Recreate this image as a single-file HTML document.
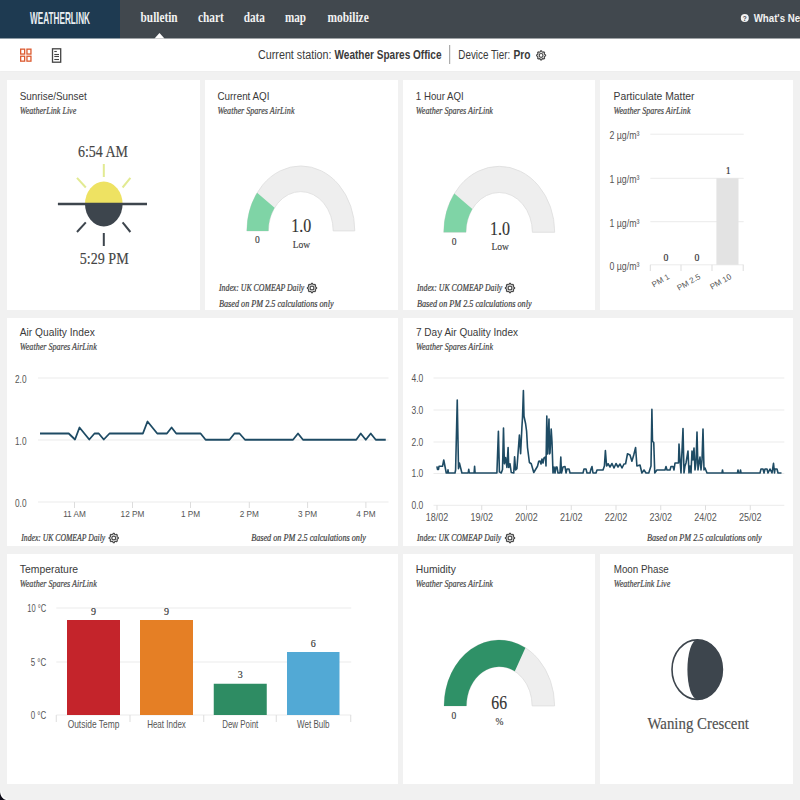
<!DOCTYPE html>
<html><head><meta charset="utf-8"><style>
*{margin:0;padding:0;box-sizing:border-box}
html,body{width:800px;height:800px;overflow:hidden;background:#f1f1f1;font-family:"Liberation Sans",sans-serif}
.hdr{position:absolute;left:0;top:0;width:800px;height:38px;background:#41484e}
.logo{position:absolute;left:0;top:0;width:120px;height:38px;background:#1e3a51}
.tb{position:absolute;left:0;top:38px;width:800px;height:33px;background:#fff;box-shadow:0 0.5px 1.5px rgba(0,0,0,0.04)}
.card{position:absolute;background:#fff}
svg.ov{position:absolute;left:0;top:0}
</style></head>
<body>
<div class="hdr"></div><div class="logo"></div><div class="tb"></div>
<div class="card" style="left:7px;top:80px;width:193px;height:229.5px"></div><div class="card" style="left:205px;top:80px;width:192.5px;height:229.5px"></div><div class="card" style="left:402.5px;top:80px;width:192.5px;height:229.5px"></div><div class="card" style="left:600px;top:80px;width:193px;height:229.5px"></div><div class="card" style="left:7px;top:318px;width:390.5px;height:228px"></div><div class="card" style="left:402.5px;top:318px;width:390.5px;height:228px"></div><div class="card" style="left:7px;top:554px;width:390.5px;height:229.5px"></div><div class="card" style="left:402.5px;top:554px;width:192.5px;height:229.5px"></div><div class="card" style="left:600px;top:554px;width:193px;height:229.5px"></div>
<svg class="ov" width="800" height="800" viewBox="0 0 800 800">
<rect x="0" y="37.5" width="120" height="1" fill="#1e3a51"/><rect x="120" y="37.5" width="680" height="1" fill="#41484e"/>
<polygon points="154.5,38.5 159.5,33 164.5,38.5" fill="#fff"/>
<text x="30" y="24" font-family='"Liberation Sans", sans-serif' font-size="16.2" font-weight="700" font-style="normal" fill="#e8edf2" text-anchor="start" textLength="60" lengthAdjust="spacingAndGlyphs" >WEATHERLINK</text>
<text x="140.6" y="22.2" font-family='"Liberation Serif", serif' font-size="14.5" font-weight="700" font-style="normal" fill="#f2f2f2" text-anchor="start" textLength="37" lengthAdjust="spacingAndGlyphs" >bulletin</text>
<text x="198" y="22.2" font-family='"Liberation Serif", serif' font-size="14.5" font-weight="700" font-style="normal" fill="#f2f2f2" text-anchor="start" textLength="25.75" lengthAdjust="spacingAndGlyphs" >chart</text>
<text x="243.75" y="22.2" font-family='"Liberation Serif", serif' font-size="14.5" font-weight="700" font-style="normal" fill="#f2f2f2" text-anchor="start" textLength="21.25" lengthAdjust="spacingAndGlyphs" >data</text>
<text x="285" y="22.2" font-family='"Liberation Serif", serif' font-size="14.5" font-weight="700" font-style="normal" fill="#f2f2f2" text-anchor="start" textLength="21" lengthAdjust="spacingAndGlyphs" >map</text>
<text x="327.5" y="22.2" font-family='"Liberation Serif", serif' font-size="14.5" font-weight="700" font-style="normal" fill="#f2f2f2" text-anchor="start" textLength="41.25" lengthAdjust="spacingAndGlyphs" >mobilize</text>
<circle cx="744.8" cy="18" r="4" fill="#f2f2f2"/>
<text x="744.8" y="20.6" font-family='"Liberation Sans", sans-serif' font-size="6.5" font-weight="700" font-style="normal" fill="#3e464d" text-anchor="middle" >?</text>
<text x="753.7" y="21.6" font-family='"Liberation Sans", sans-serif' font-size="10.5" font-weight="700" font-style="normal" fill="#f2f2f2" text-anchor="start" textLength="54" lengthAdjust="spacingAndGlyphs" >What's New</text>
<rect x="20.65" y="49.15" width="4.0" height="4.9" fill="none" stroke="#dc5a30" stroke-width="1.3"/>
<rect x="26.95" y="49.15" width="4.0" height="4.9" fill="none" stroke="#dc5a30" stroke-width="1.3"/>
<rect x="20.65" y="56.25" width="4.0" height="4.9" fill="none" stroke="#dc5a30" stroke-width="1.3"/>
<rect x="26.95" y="56.25" width="4.0" height="4.9" fill="none" stroke="#dc5a30" stroke-width="1.3"/>
<rect x="52.5" y="48.8" width="8.2" height="13.4" fill="none" stroke="#444" stroke-width="1.3"/>
<line x1="54.3" y1="51.5" x2="56.8" y2="51.5" stroke="#444" stroke-width="1.1"/>
<line x1="54.3" y1="54.5" x2="59" y2="54.5" stroke="#444" stroke-width="1.1"/>
<line x1="54.3" y1="56.5" x2="59" y2="56.5" stroke="#444" stroke-width="1.1"/>
<line x1="54.3" y1="59.5" x2="59" y2="59.5" stroke="#444" stroke-width="1.1"/>
<text x="258" y="59.4" font-family='"Liberation Sans", sans-serif' font-size="12" font-weight="400" font-style="normal" fill="#3a3a3a" text-anchor="start" textLength="73.5" lengthAdjust="spacingAndGlyphs" >Current station:</text>
<text x="334.5" y="59.4" font-family='"Liberation Sans", sans-serif' font-size="12" font-weight="700" font-style="normal" fill="#3a3a3a" text-anchor="start" textLength="107" lengthAdjust="spacingAndGlyphs" >Weather Spares Office</text>
<line x1="449.7" y1="45" x2="449.7" y2="64" stroke="#999" stroke-width="1"/>
<text x="458.3" y="59.4" font-family='"Liberation Sans", sans-serif' font-size="12" font-weight="400" font-style="normal" fill="#3a3a3a" text-anchor="start" textLength="52" lengthAdjust="spacingAndGlyphs" >Device Tier:</text>
<text x="513.5" y="59.4" font-family='"Liberation Sans", sans-serif' font-size="12" font-weight="700" font-style="normal" fill="#3a3a3a" text-anchor="start" textLength="17" lengthAdjust="spacingAndGlyphs" >Pro</text>
<polygon points="545.58,54.96 545.58,55.84 544.54,56.45 544.27,57.10 544.58,58.25 543.95,58.88 542.80,58.57 542.15,58.84 541.54,59.88 540.66,59.88 540.05,58.84 539.40,58.57 538.25,58.88 537.62,58.25 537.93,57.10 537.66,56.45 536.62,55.84 536.62,54.96 537.66,54.35 537.93,53.70 537.62,52.55 538.25,51.92 539.40,52.23 540.05,51.96 540.66,50.92 541.54,50.92 542.15,51.96 542.80,52.23 543.95,51.92 544.58,52.55 544.27,53.70 544.54,54.35" fill="none" stroke="#4a4a4a" stroke-width="1.2" stroke-linejoin="round"/><circle cx="541.1" cy="55.4" r="1.89" fill="none" stroke="#4a4a4a" stroke-width="1.2"/>
<text x="19.75" y="99.75" font-family='"Liberation Sans", sans-serif' font-size="11.5" font-weight="400" font-style="normal" fill="#3a3a3a" text-anchor="start" textLength="67" lengthAdjust="spacingAndGlyphs" >Sunrise/Sunset</text>
<text x="19.75" y="113.95" font-family='"Liberation Serif", serif' font-size="10" font-weight="400" font-style="italic" fill="#4a4a4a" text-anchor="start" textLength="56.5" lengthAdjust="spacingAndGlyphs"  stroke="#4a4a4a" stroke-width="0.22">WeatherLink Live</text>
<text x="217.5" y="99.75" font-family='"Liberation Sans", sans-serif' font-size="11.5" font-weight="400" font-style="normal" fill="#3a3a3a" text-anchor="start" textLength="52" lengthAdjust="spacingAndGlyphs" >Current AQI</text>
<text x="217.5" y="113.95" font-family='"Liberation Serif", serif' font-size="10" font-weight="400" font-style="italic" fill="#4a4a4a" text-anchor="start" textLength="77" lengthAdjust="spacingAndGlyphs"  stroke="#4a4a4a" stroke-width="0.22">Weather Spares AirLink</text>
<text x="415.8" y="99.75" font-family='"Liberation Sans", sans-serif' font-size="11.5" font-weight="400" font-style="normal" fill="#3a3a3a" text-anchor="start" textLength="48" lengthAdjust="spacingAndGlyphs" >1 Hour AQI</text>
<text x="415.8" y="113.95" font-family='"Liberation Serif", serif' font-size="10" font-weight="400" font-style="italic" fill="#4a4a4a" text-anchor="start" textLength="77" lengthAdjust="spacingAndGlyphs"  stroke="#4a4a4a" stroke-width="0.22">Weather Spares AirLink</text>
<text x="613.5" y="99.75" font-family='"Liberation Sans", sans-serif' font-size="11.5" font-weight="400" font-style="normal" fill="#3a3a3a" text-anchor="start" textLength="81" lengthAdjust="spacingAndGlyphs" >Particulate Matter</text>
<text x="613.5" y="113.95" font-family='"Liberation Serif", serif' font-size="10" font-weight="400" font-style="italic" fill="#4a4a4a" text-anchor="start" textLength="77" lengthAdjust="spacingAndGlyphs"  stroke="#4a4a4a" stroke-width="0.22">Weather Spares AirLink</text>
<text x="19.75" y="336" font-family='"Liberation Sans", sans-serif' font-size="11.5" font-weight="400" font-style="normal" fill="#3a3a3a" text-anchor="start" textLength="75" lengthAdjust="spacingAndGlyphs" >Air Quality Index</text>
<text x="19.75" y="350.2" font-family='"Liberation Serif", serif' font-size="10" font-weight="400" font-style="italic" fill="#4a4a4a" text-anchor="start" textLength="77" lengthAdjust="spacingAndGlyphs"  stroke="#4a4a4a" stroke-width="0.22">Weather Spares AirLink</text>
<text x="416" y="336" font-family='"Liberation Sans", sans-serif' font-size="11.5" font-weight="400" font-style="normal" fill="#3a3a3a" text-anchor="start" textLength="102" lengthAdjust="spacingAndGlyphs" >7 Day Air Quality Index</text>
<text x="416" y="350.2" font-family='"Liberation Serif", serif' font-size="10" font-weight="400" font-style="italic" fill="#4a4a4a" text-anchor="start" textLength="77" lengthAdjust="spacingAndGlyphs"  stroke="#4a4a4a" stroke-width="0.22">Weather Spares AirLink</text>
<text x="19.75" y="572.5" font-family='"Liberation Sans", sans-serif' font-size="11.5" font-weight="400" font-style="normal" fill="#3a3a3a" text-anchor="start" textLength="58.4" lengthAdjust="spacingAndGlyphs" >Temperature</text>
<text x="19.75" y="586.7" font-family='"Liberation Serif", serif' font-size="10" font-weight="400" font-style="italic" fill="#4a4a4a" text-anchor="start" textLength="77" lengthAdjust="spacingAndGlyphs"  stroke="#4a4a4a" stroke-width="0.22">Weather Spares AirLink</text>
<text x="415.8" y="572.5" font-family='"Liberation Sans", sans-serif' font-size="11.5" font-weight="400" font-style="normal" fill="#3a3a3a" text-anchor="start" textLength="40" lengthAdjust="spacingAndGlyphs" >Humidity</text>
<text x="415.8" y="586.7" font-family='"Liberation Serif", serif' font-size="10" font-weight="400" font-style="italic" fill="#4a4a4a" text-anchor="start" textLength="77" lengthAdjust="spacingAndGlyphs"  stroke="#4a4a4a" stroke-width="0.22">Weather Spares AirLink</text>
<text x="613.75" y="572.5" font-family='"Liberation Sans", sans-serif' font-size="11.5" font-weight="400" font-style="normal" fill="#3a3a3a" text-anchor="start" textLength="55" lengthAdjust="spacingAndGlyphs" >Moon Phase</text>
<text x="613.75" y="586.7" font-family='"Liberation Serif", serif' font-size="10" font-weight="400" font-style="italic" fill="#4a4a4a" text-anchor="start" textLength="56.5" lengthAdjust="spacingAndGlyphs"  stroke="#4a4a4a" stroke-width="0.22">WeatherLink Live</text>
<text x="78" y="157.2" font-family='"Liberation Serif", serif' font-size="16.5" font-weight="400" font-style="normal" fill="#444" text-anchor="start" textLength="50" lengthAdjust="spacingAndGlyphs"  stroke="#444" stroke-width="0.15">6:54 AM</text>
<text x="79.7" y="263.5" font-family='"Liberation Serif", serif' font-size="16.5" font-weight="400" font-style="normal" fill="#444" text-anchor="start" textLength="49" lengthAdjust="spacingAndGlyphs"  stroke="#444" stroke-width="0.15">5:29 PM</text>
<path d="M85.0,204 A18.8,22.4 0 0 1 122.6,204 Z" fill="#eee262"/>
<path d="M85.0,204 A18.8,22.4 0 0 0 122.6,204 Z" fill="#3d454d"/>
<line x1="57.9" y1="204" x2="147" y2="204" stroke="#3d454d" stroke-width="2.6"/>
<line x1="103.8" y1="164" x2="103.8" y2="177" stroke="#e2ea92" stroke-width="2"/>
<line x1="77" y1="177.8" x2="85.8" y2="187.5" stroke="#e2ea92" stroke-width="2"/>
<line x1="130.4" y1="177.8" x2="122.6" y2="187.5" stroke="#e2ea92" stroke-width="2"/>
<line x1="103.8" y1="233" x2="103.8" y2="246" stroke="#3d454d" stroke-width="2"/>
<line x1="85.8" y1="222.4" x2="77" y2="232" stroke="#3d454d" stroke-width="2"/>
<line x1="122.6" y1="222.4" x2="130.4" y2="232" stroke="#3d454d" stroke-width="2"/>
<path d="M246.80,230.90 A54,65 0 0 1 354.80,230.90 L333.20,230.90 A32.4,39.3 0 0 0 268.40,230.90 Z" fill="#eeeeee" stroke="#dddddd" stroke-width="0.8"/>
<path d="M246.80,230.90 A54,65 0 0 1 257.11,192.69 L274.59,207.80 A32.4,39.3 0 0 0 268.40,230.90 Z" fill="#7fd4a6" stroke="none" stroke-width="0"/>
<text x="291.3" y="232.4" font-family='"Liberation Serif", serif' font-size="19" font-weight="400" font-style="normal" fill="#333" text-anchor="start" textLength="20" lengthAdjust="spacingAndGlyphs"  stroke="#333" stroke-width="0.15">1.0</text>
<text x="292.7" y="248.2" font-family='"Liberation Serif", serif' font-size="11" font-weight="400" font-style="normal" fill="#444" text-anchor="start" textLength="17.5" lengthAdjust="spacingAndGlyphs"  stroke="#444" stroke-width="0.15">Low</text>
<text x="255.0" y="243.2" font-family='"Liberation Serif", serif' font-size="9.5" font-weight="400" font-style="normal" fill="#444" text-anchor="start"  stroke="#444" stroke-width="0.15">0</text>
<path d="M443.70,232.30 A55.5,66 0 0 1 554.70,232.30 L532.40,232.30 A33.2,39.8 0 0 0 466.00,232.30 Z" fill="#eeeeee" stroke="#dddddd" stroke-width="0.8"/>
<path d="M443.70,232.30 A55.5,66 0 0 1 454.30,193.51 L472.34,208.91 A33.2,39.8 0 0 0 466.00,232.30 Z" fill="#7fd4a6" stroke="none" stroke-width="0"/>
<text x="490.0" y="234.6" font-family='"Liberation Serif", serif' font-size="19" font-weight="400" font-style="normal" fill="#333" text-anchor="start" textLength="20" lengthAdjust="spacingAndGlyphs"  stroke="#333" stroke-width="0.15">1.0</text>
<text x="491.4" y="250.4" font-family='"Liberation Serif", serif' font-size="11" font-weight="400" font-style="normal" fill="#444" text-anchor="start" textLength="17.5" lengthAdjust="spacingAndGlyphs"  stroke="#444" stroke-width="0.15">Low</text>
<text x="451.8" y="244.9" font-family='"Liberation Serif", serif' font-size="9.5" font-weight="400" font-style="normal" fill="#444" text-anchor="start"  stroke="#444" stroke-width="0.15">0</text>
<text x="219" y="291.4" font-family='"Liberation Serif", serif' font-size="9.5" font-weight="400" font-style="italic" fill="#444" text-anchor="start" textLength="85.3" lengthAdjust="spacingAndGlyphs"  stroke="#444" stroke-width="0.22">Index: UK COMEAP Daily</text>
<polygon points="316.58,287.55 316.58,288.45 315.52,289.07 315.25,289.73 315.56,290.92 314.92,291.56 313.73,291.25 313.07,291.52 312.45,292.58 311.55,292.58 310.93,291.52 310.27,291.25 309.08,291.56 308.44,290.92 308.75,289.73 308.48,289.07 307.42,288.45 307.42,287.55 308.48,286.93 308.75,286.27 308.44,285.08 309.08,284.44 310.27,284.75 310.93,284.48 311.55,283.42 312.45,283.42 313.07,284.48 313.73,284.75 314.92,284.44 315.56,285.08 315.25,286.27 315.52,286.93" fill="none" stroke="#4a4a4a" stroke-width="1.2" stroke-linejoin="round"/><circle cx="312" cy="288" r="1.93" fill="none" stroke="#4a4a4a" stroke-width="1.2"/>
<text x="219" y="306.7" font-family='"Liberation Serif", serif' font-size="9.5" font-weight="400" font-style="italic" fill="#444" text-anchor="start" textLength="114.6" lengthAdjust="spacingAndGlyphs"  stroke="#444" stroke-width="0.22">Based on PM 2.5 calculations only</text>
<text x="417" y="291.4" font-family='"Liberation Serif", serif' font-size="9.5" font-weight="400" font-style="italic" fill="#444" text-anchor="start" textLength="85.3" lengthAdjust="spacingAndGlyphs"  stroke="#444" stroke-width="0.22">Index: UK COMEAP Daily</text>
<polygon points="514.58,287.55 514.58,288.45 513.52,289.07 513.25,289.73 513.56,290.92 512.92,291.56 511.73,291.25 511.07,291.52 510.45,292.58 509.55,292.58 508.93,291.52 508.27,291.25 507.08,291.56 506.44,290.92 506.75,289.73 506.48,289.07 505.42,288.45 505.42,287.55 506.48,286.93 506.75,286.27 506.44,285.08 507.08,284.44 508.27,284.75 508.93,284.48 509.55,283.42 510.45,283.42 511.07,284.48 511.73,284.75 512.92,284.44 513.56,285.08 513.25,286.27 513.52,286.93" fill="none" stroke="#4a4a4a" stroke-width="1.2" stroke-linejoin="round"/><circle cx="510" cy="288" r="1.93" fill="none" stroke="#4a4a4a" stroke-width="1.2"/>
<text x="417" y="306.7" font-family='"Liberation Serif", serif' font-size="9.5" font-weight="400" font-style="italic" fill="#444" text-anchor="start" textLength="114.6" lengthAdjust="spacingAndGlyphs"  stroke="#444" stroke-width="0.22">Based on PM 2.5 calculations only</text>
<line x1="650.3" y1="134.2" x2="743.7" y2="134.2" stroke="#ebebeb" stroke-width="1"/>
<text x="609.4" y="139.0" font-family='"Liberation Sans", sans-serif' font-size="10.5" font-weight="400" font-style="normal" fill="#555" text-anchor="start" textLength="30" lengthAdjust="spacingAndGlyphs" >2 µg/m³</text>
<line x1="650.3" y1="178.3" x2="743.7" y2="178.3" stroke="#ebebeb" stroke-width="1"/>
<text x="609.4" y="183.10000000000002" font-family='"Liberation Sans", sans-serif' font-size="10.5" font-weight="400" font-style="normal" fill="#555" text-anchor="start" textLength="30" lengthAdjust="spacingAndGlyphs" >1 µg/m³</text>
<line x1="650.3" y1="221.7" x2="743.7" y2="221.7" stroke="#ebebeb" stroke-width="1"/>
<text x="609.4" y="226.5" font-family='"Liberation Sans", sans-serif' font-size="10.5" font-weight="400" font-style="normal" fill="#555" text-anchor="start" textLength="30" lengthAdjust="spacingAndGlyphs" >1 µg/m³</text>
<line x1="650.3" y1="264.8" x2="743.7" y2="264.8" stroke="#ebebeb" stroke-width="1"/>
<text x="609.4" y="269.6" font-family='"Liberation Sans", sans-serif' font-size="10.5" font-weight="400" font-style="normal" fill="#555" text-anchor="start" textLength="30" lengthAdjust="spacingAndGlyphs" >0 µg/m³</text>
<rect x="716.4" y="178.3" width="22.1" height="86.5" fill="#e3e3e3"/>
<line x1="650.3" y1="264.8" x2="650.3" y2="271" stroke="#ddd" stroke-width="1"/>
<line x1="681" y1="264.8" x2="681" y2="271" stroke="#ddd" stroke-width="1"/>
<line x1="712" y1="264.8" x2="712" y2="271" stroke="#ddd" stroke-width="1"/>
<line x1="743.2" y1="264.8" x2="743.2" y2="271" stroke="#ddd" stroke-width="1"/>
<text x="728.1" y="174" font-family='"Liberation Serif", serif' font-size="9.8" font-weight="400" font-style="normal" fill="#333" text-anchor="middle"  stroke="#333" stroke-width="0.15">1</text>
<text x="666" y="260.8" font-family='"Liberation Serif", serif' font-size="9.8" font-weight="400" font-style="normal" fill="#333" text-anchor="middle"  stroke="#333" stroke-width="0.15">0</text>
<text x="697" y="260.8" font-family='"Liberation Serif", serif' font-size="9.8" font-weight="400" font-style="normal" fill="#333" text-anchor="middle"  stroke="#333" stroke-width="0.15">0</text>
<g transform="translate(667,273) rotate(-30)"><text x="0" y="6" font-family='"Liberation Sans", sans-serif' font-size="8" font-weight="400" font-style="normal" fill="#555" text-anchor="end" >PM 1</text></g>
<g transform="translate(698,273) rotate(-30)"><text x="0" y="6" font-family='"Liberation Sans", sans-serif' font-size="8" font-weight="400" font-style="normal" fill="#555" text-anchor="end" >PM 2.5</text></g>
<g transform="translate(729,273) rotate(-30)"><text x="0" y="6" font-family='"Liberation Sans", sans-serif' font-size="8" font-weight="400" font-style="normal" fill="#555" text-anchor="end" >PM 10</text></g>
<line x1="38" y1="378" x2="388.5" y2="378" stroke="#ebebeb" stroke-width="1"/>
<text x="15" y="382.75" font-family='"Liberation Sans", sans-serif' font-size="10.5" font-weight="400" font-style="normal" fill="#555" text-anchor="start" textLength="11.5" lengthAdjust="spacingAndGlyphs" >2.0</text>
<line x1="38" y1="440" x2="388.5" y2="440" stroke="#ebebeb" stroke-width="1"/>
<text x="15" y="444.75" font-family='"Liberation Sans", sans-serif' font-size="10.5" font-weight="400" font-style="normal" fill="#555" text-anchor="start" textLength="11.5" lengthAdjust="spacingAndGlyphs" >1.0</text>
<line x1="38" y1="502" x2="388.5" y2="502" stroke="#ebebeb" stroke-width="1"/>
<text x="15" y="506.75" font-family='"Liberation Sans", sans-serif' font-size="10.5" font-weight="400" font-style="normal" fill="#555" text-anchor="start" textLength="11.5" lengthAdjust="spacingAndGlyphs" >0.0</text>
<line x1="74.5" y1="502" x2="74.5" y2="508" stroke="#ddd" stroke-width="1"/>
<text x="74.5" y="517" font-family='"Liberation Sans", sans-serif' font-size="9.8" font-weight="400" font-style="normal" fill="#555" text-anchor="middle" textLength="22.73" lengthAdjust="spacingAndGlyphs" >11 AM</text>
<line x1="132.5" y1="502" x2="132.5" y2="508" stroke="#ddd" stroke-width="1"/>
<text x="132.5" y="517" font-family='"Liberation Sans", sans-serif' font-size="9.8" font-weight="400" font-style="normal" fill="#555" text-anchor="middle" textLength="23.79" lengthAdjust="spacingAndGlyphs" >12 PM</text>
<line x1="190.5" y1="502" x2="190.5" y2="508" stroke="#ddd" stroke-width="1"/>
<text x="190.5" y="517" font-family='"Liberation Sans", sans-serif' font-size="9.8" font-weight="400" font-style="normal" fill="#555" text-anchor="middle" textLength="19.21" lengthAdjust="spacingAndGlyphs" >1 PM</text>
<line x1="249.3" y1="502" x2="249.3" y2="508" stroke="#ddd" stroke-width="1"/>
<text x="249.3" y="517" font-family='"Liberation Sans", sans-serif' font-size="9.8" font-weight="400" font-style="normal" fill="#555" text-anchor="middle" textLength="19.21" lengthAdjust="spacingAndGlyphs" >2 PM</text>
<line x1="307.6" y1="502" x2="307.6" y2="508" stroke="#ddd" stroke-width="1"/>
<text x="307.6" y="517" font-family='"Liberation Sans", sans-serif' font-size="9.8" font-weight="400" font-style="normal" fill="#555" text-anchor="middle" textLength="19.21" lengthAdjust="spacingAndGlyphs" >3 PM</text>
<line x1="365.9" y1="502" x2="365.9" y2="508" stroke="#ddd" stroke-width="1"/>
<text x="365.9" y="517" font-family='"Liberation Sans", sans-serif' font-size="9.8" font-weight="400" font-style="normal" fill="#555" text-anchor="middle" textLength="19.21" lengthAdjust="spacingAndGlyphs" >4 PM</text>
<polyline points="40,433.5 68.75,433.5 75,439.5 79.5,427.5 89.25,439.5 94.5,433.5 98.75,433.5 103.75,439.5 109.5,433.5 142.9,433.5 147.5,421.5 157.25,433.5 166.9,433.5 171.6,427.5 176.25,433.5 200.6,433.5 205.6,439.75 229.5,439.75 234.5,433.5 239.5,433.5 245,439.75 293,439.75 298,433.5 303,439.75 356.25,439.75 360.75,433.5 365.75,439.75 370.75,433.5 375.75,439.75 385.75,439.75" fill="none" stroke="#1e4b64" stroke-width="1.8" stroke-linejoin="round"/>
<text x="21.25" y="541" font-family='"Liberation Serif", serif' font-size="9.5" font-weight="400" font-style="italic" fill="#444" text-anchor="start" textLength="84" lengthAdjust="spacingAndGlyphs"  stroke="#444" stroke-width="0.22">Index: UK COMEAP Daily</text>
<polygon points="118.33,537.55 118.33,538.45 117.27,539.07 117.00,539.73 117.31,540.92 116.67,541.56 115.48,541.25 114.82,541.52 114.20,542.58 113.30,542.58 112.68,541.52 112.02,541.25 110.83,541.56 110.19,540.92 110.50,539.73 110.23,539.07 109.17,538.45 109.17,537.55 110.23,536.93 110.50,536.27 110.19,535.08 110.83,534.44 112.02,534.75 112.68,534.48 113.30,533.42 114.20,533.42 114.82,534.48 115.48,534.75 116.67,534.44 117.31,535.08 117.00,536.27 117.27,536.93" fill="none" stroke="#4a4a4a" stroke-width="1.2" stroke-linejoin="round"/><circle cx="113.75" cy="538" r="1.93" fill="none" stroke="#4a4a4a" stroke-width="1.2"/>
<text x="251.2" y="541" font-family='"Liberation Serif", serif' font-size="9.5" font-weight="400" font-style="italic" fill="#444" text-anchor="start" textLength="114.7" lengthAdjust="spacingAndGlyphs"  stroke="#444" stroke-width="0.22">Based on PM 2.5 calculations only</text>
<line x1="433.5" y1="378" x2="784.3" y2="378" stroke="#ebebeb" stroke-width="1"/>
<text x="411.5" y="381.6" font-family='"Liberation Sans", sans-serif' font-size="10.2" font-weight="400" font-style="normal" fill="#555" text-anchor="start" textLength="11.8" lengthAdjust="spacingAndGlyphs" >4.0</text>
<line x1="433.5" y1="410" x2="784.3" y2="410" stroke="#ebebeb" stroke-width="1"/>
<text x="411.5" y="413.6" font-family='"Liberation Sans", sans-serif' font-size="10.2" font-weight="400" font-style="normal" fill="#555" text-anchor="start" textLength="11.8" lengthAdjust="spacingAndGlyphs" >3.0</text>
<line x1="433.5" y1="442" x2="784.3" y2="442" stroke="#ebebeb" stroke-width="1"/>
<text x="411.5" y="445.6" font-family='"Liberation Sans", sans-serif' font-size="10.2" font-weight="400" font-style="normal" fill="#555" text-anchor="start" textLength="11.8" lengthAdjust="spacingAndGlyphs" >2.0</text>
<line x1="433.5" y1="473.5" x2="784.3" y2="473.5" stroke="#ebebeb" stroke-width="1"/>
<text x="411.5" y="477.1" font-family='"Liberation Sans", sans-serif' font-size="10.2" font-weight="400" font-style="normal" fill="#555" text-anchor="start" textLength="11.8" lengthAdjust="spacingAndGlyphs" >1.0</text>
<line x1="433.5" y1="505.3" x2="784.3" y2="505.3" stroke="#ebebeb" stroke-width="1"/>
<text x="411.5" y="508.90000000000003" font-family='"Liberation Sans", sans-serif' font-size="10.2" font-weight="400" font-style="normal" fill="#555" text-anchor="start" textLength="11.8" lengthAdjust="spacingAndGlyphs" >0.0</text>
<line x1="437.0" y1="505.3" x2="437.0" y2="510" stroke="#ddd" stroke-width="1"/>
<text x="437.0" y="520.8" font-family='"Liberation Sans", sans-serif' font-size="10.3" font-weight="400" font-style="normal" fill="#555" text-anchor="middle" textLength="22.5" lengthAdjust="spacingAndGlyphs" >18/02</text>
<line x1="481.75" y1="505.3" x2="481.75" y2="510" stroke="#ddd" stroke-width="1"/>
<text x="481.75" y="520.8" font-family='"Liberation Sans", sans-serif' font-size="10.3" font-weight="400" font-style="normal" fill="#555" text-anchor="middle" textLength="22.5" lengthAdjust="spacingAndGlyphs" >19/02</text>
<line x1="526.5" y1="505.3" x2="526.5" y2="510" stroke="#ddd" stroke-width="1"/>
<text x="526.5" y="520.8" font-family='"Liberation Sans", sans-serif' font-size="10.3" font-weight="400" font-style="normal" fill="#555" text-anchor="middle" textLength="22.5" lengthAdjust="spacingAndGlyphs" >20/02</text>
<line x1="571.25" y1="505.3" x2="571.25" y2="510" stroke="#ddd" stroke-width="1"/>
<text x="571.25" y="520.8" font-family='"Liberation Sans", sans-serif' font-size="10.3" font-weight="400" font-style="normal" fill="#555" text-anchor="middle" textLength="22.5" lengthAdjust="spacingAndGlyphs" >21/02</text>
<line x1="616.0" y1="505.3" x2="616.0" y2="510" stroke="#ddd" stroke-width="1"/>
<text x="616.0" y="520.8" font-family='"Liberation Sans", sans-serif' font-size="10.3" font-weight="400" font-style="normal" fill="#555" text-anchor="middle" textLength="22.5" lengthAdjust="spacingAndGlyphs" >22/02</text>
<line x1="660.75" y1="505.3" x2="660.75" y2="510" stroke="#ddd" stroke-width="1"/>
<text x="660.75" y="520.8" font-family='"Liberation Sans", sans-serif' font-size="10.3" font-weight="400" font-style="normal" fill="#555" text-anchor="middle" textLength="22.5" lengthAdjust="spacingAndGlyphs" >23/02</text>
<line x1="705.5" y1="505.3" x2="705.5" y2="510" stroke="#ddd" stroke-width="1"/>
<text x="705.5" y="520.8" font-family='"Liberation Sans", sans-serif' font-size="10.3" font-weight="400" font-style="normal" fill="#555" text-anchor="middle" textLength="22.5" lengthAdjust="spacingAndGlyphs" >24/02</text>
<line x1="750.25" y1="505.3" x2="750.25" y2="510" stroke="#ddd" stroke-width="1"/>
<text x="750.25" y="520.8" font-family='"Liberation Sans", sans-serif' font-size="10.3" font-weight="400" font-style="normal" fill="#555" text-anchor="middle" textLength="22.5" lengthAdjust="spacingAndGlyphs" >25/02</text>
<polyline points="436.9,466.3 437.5,469.4 438.5,469.4 439,466.3 442.5,466.3 443.75,460 446.25,473 447.5,473 448,469.75 448.5,473 455,473 455.6,470 457.25,400 458.5,468.75 459.4,463 461.9,473 468.2,473 468.75,469.4 469.3,473 474.1,473 474.6,466.25 475.1,473 496.9,473 498.4,431.25 499.4,471.9 501.25,473 502.5,469.4 503.5,428.1 504.4,463.75 505.6,457.5 506.9,467.5 508.1,447.5 508.75,467.5 510,463.75 511.25,472.5 513.75,473 514.6,456.9 515.6,470 516.9,468.75 518.1,452.5 519.4,435 520.6,453.75 521.9,427.5 522.5,417.5 523.4,390.6 524,416.25 525.6,423.75 526.6,431.25 527.5,447.5 529.4,462.5 531.25,463.75 533.75,472.5 537.5,466.25 538.75,461.25 540,461 541,464 542,459 543,463 544,458 545.5,457 546,466 546.8,416 547.5,454 549,419 549.5,454 550,453 551.2,429 552,442 553,473 554,467 555,473 556,467 557,467 558,473 560,473 560.8,457 561.5,473 563,467 565,466.5 566,473 567,469 569,469 570,473 574,473 583,473 584,469 586,469 587,473 590,473 591,469 592,466.5 593,473 596,473 597,470 603,470 604.4,466 605.4,450.6 606.6,466 608.1,463.75 610,467 612,463.5 614,468 616,463.5 618,467 620,464 622,468 624,464 625.6,463.75 627.5,453.75 630,455 631.9,461.25 633.75,455 635.6,447.5 636.9,466 640,465 641.9,473 644,470 646,473 648.75,473 651,466 651.9,409.4 652.5,441.25 653.75,442.5 654.75,473 656.9,470 665,470 666,466.5 667,470 670,470 671,466.5 673,466.5 674,470 675,463 678.5,463 679,444 680,460 681,473 683,428.5 684,473 685,466 686,463 688,451 689,473 690,466 691,473 692,451 693,460 694,448 695,470 696,463 697,432 698,470 699,463 700,457 701,470 702,460 703,429 704,470 705,468 707,473 722,473 722.5,470 723,473 737.5,473 738,470 738.5,473 740,473 740.5,470 741,473 760,473 761,469 763,469 764,473 765,469 767,469 768,473 770,469 772,473 773.5,463.3 774.5,473 775,469 777,469 778,473 781.5,473" fill="none" stroke="#1e4b64" stroke-width="1.6" stroke-linejoin="round"/>
<text x="417" y="541" font-family='"Liberation Serif", serif' font-size="9.5" font-weight="400" font-style="italic" fill="#444" text-anchor="start" textLength="84.25" lengthAdjust="spacingAndGlyphs"  stroke="#444" stroke-width="0.22">Index: UK COMEAP Daily</text>
<polygon points="514.58,537.55 514.58,538.45 513.52,539.07 513.25,539.73 513.56,540.92 512.92,541.56 511.73,541.25 511.07,541.52 510.45,542.58 509.55,542.58 508.93,541.52 508.27,541.25 507.08,541.56 506.44,540.92 506.75,539.73 506.48,539.07 505.42,538.45 505.42,537.55 506.48,536.93 506.75,536.27 506.44,535.08 507.08,534.44 508.27,534.75 508.93,534.48 509.55,533.42 510.45,533.42 511.07,534.48 511.73,534.75 512.92,534.44 513.56,535.08 513.25,536.27 513.52,536.93" fill="none" stroke="#4a4a4a" stroke-width="1.2" stroke-linejoin="round"/><circle cx="510" cy="538" r="1.93" fill="none" stroke="#4a4a4a" stroke-width="1.2"/>
<text x="647" y="541" font-family='"Liberation Serif", serif' font-size="9.5" font-weight="400" font-style="italic" fill="#444" text-anchor="start" textLength="114.7" lengthAdjust="spacingAndGlyphs"  stroke="#444" stroke-width="0.22">Based on PM 2.5 calculations only</text>
<line x1="56.25" y1="608" x2="351.25" y2="608" stroke="#ebebeb" stroke-width="1"/>
<text x="46.2" y="612.4" font-family='"Liberation Sans", sans-serif' font-size="10.4" font-weight="400" font-style="normal" fill="#555" text-anchor="end" textLength="19" lengthAdjust="spacingAndGlyphs" >10 °C</text>
<line x1="56.25" y1="662" x2="351.25" y2="662" stroke="#ebebeb" stroke-width="1"/>
<text x="46.2" y="666.4" font-family='"Liberation Sans", sans-serif' font-size="10.4" font-weight="400" font-style="normal" fill="#555" text-anchor="end" textLength="15.5" lengthAdjust="spacingAndGlyphs" >5 °C</text>
<line x1="56.25" y1="715" x2="351.25" y2="715" stroke="#ebebeb" stroke-width="1"/>
<text x="46.2" y="719.4" font-family='"Liberation Sans", sans-serif' font-size="10.4" font-weight="400" font-style="normal" fill="#555" text-anchor="end" textLength="15.5" lengthAdjust="spacingAndGlyphs" >0 °C</text>
<rect x="67" y="620" width="53" height="95" fill="#c4242b"/>
<text x="93.5" y="614.5" font-family='"Liberation Serif", serif' font-size="10" font-weight="400" font-style="normal" fill="#333" text-anchor="middle"  stroke="#333" stroke-width="0.15">9</text>
<text x="93.5" y="727.8" font-family='"Liberation Sans", sans-serif' font-size="10.5" font-weight="400" font-style="normal" fill="#555" text-anchor="middle" textLength="51.75" lengthAdjust="spacingAndGlyphs" >Outside Temp</text>
<rect x="140" y="620" width="53" height="95" fill="#e57f25"/>
<text x="166.5" y="614.5" font-family='"Liberation Serif", serif' font-size="10" font-weight="400" font-style="normal" fill="#333" text-anchor="middle"  stroke="#333" stroke-width="0.15">9</text>
<text x="166.5" y="727.8" font-family='"Liberation Sans", sans-serif' font-size="10.5" font-weight="400" font-style="normal" fill="#555" text-anchor="middle" textLength="38.75" lengthAdjust="spacingAndGlyphs" >Heat Index</text>
<rect x="213.75" y="683.75" width="53.0" height="31.25" fill="#2e8c63"/>
<text x="240.25" y="678.25" font-family='"Liberation Serif", serif' font-size="10" font-weight="400" font-style="normal" fill="#333" text-anchor="middle"  stroke="#333" stroke-width="0.15">3</text>
<text x="240.25" y="727.8" font-family='"Liberation Sans", sans-serif' font-size="10.5" font-weight="400" font-style="normal" fill="#555" text-anchor="middle" textLength="36" lengthAdjust="spacingAndGlyphs" >Dew Point</text>
<rect x="287" y="652" width="52.5" height="63" fill="#52a9d5"/>
<text x="313.25" y="646.5" font-family='"Liberation Serif", serif' font-size="10" font-weight="400" font-style="normal" fill="#333" text-anchor="middle"  stroke="#333" stroke-width="0.15">6</text>
<text x="313.25" y="727.8" font-family='"Liberation Sans", sans-serif' font-size="10.5" font-weight="400" font-style="normal" fill="#555" text-anchor="middle" textLength="32.5" lengthAdjust="spacingAndGlyphs" >Wet Bulb</text>
<line x1="56.25" y1="715" x2="56.25" y2="722" stroke="#ddd" stroke-width="1"/>
<line x1="130" y1="715" x2="130" y2="722" stroke="#ddd" stroke-width="1"/>
<line x1="203.75" y1="715" x2="203.75" y2="722" stroke="#ddd" stroke-width="1"/>
<line x1="276.25" y1="715" x2="276.25" y2="722" stroke="#ddd" stroke-width="1"/>
<line x1="350.75" y1="715" x2="350.75" y2="722" stroke="#ddd" stroke-width="1"/>
<path d="M444.00,705.90 A55.3,66 0 0 1 554.60,705.90 L532.15,705.90 A32.85,39.25 0 0 0 466.45,705.90 Z" fill="#eeeeee" stroke="#dddddd" stroke-width="0.8"/>
<path d="M444.00,705.90 A55.3,66 0 0 1 525.43,647.73 L514.82,671.31 A32.85,39.25 0 0 0 466.45,705.90 Z" fill="#2f9167" stroke="none" stroke-width="0"/>
<text x="491.25" y="709" font-family='"Liberation Serif", serif' font-size="19" font-weight="400" font-style="normal" fill="#333" text-anchor="start" textLength="15.75" lengthAdjust="spacingAndGlyphs"  stroke="#333" stroke-width="0.15">66</text>
<text x="495.6" y="725" font-family='"Liberation Serif", serif' font-size="9.5" font-weight="400" font-style="normal" fill="#444" text-anchor="start"  stroke="#444" stroke-width="0.15">%</text>
<text x="451.6" y="718.8" font-family='"Liberation Serif", serif' font-size="9.5" font-weight="400" font-style="normal" fill="#444" text-anchor="start"  stroke="#444" stroke-width="0.15">0</text>
<ellipse cx="697.2" cy="669.6" rx="25.2" ry="29.75" fill="#fff" stroke="#3d454d" stroke-width="1.6"/>
<path d="M697.2,639.85 A25.2,29.75 0 0 1 697.2,699.35 A9.8,29.75 0 0 1 697.2,639.85 Z" fill="#3d454d"/>
<text x="647.5" y="728.9" font-family='"Liberation Serif", serif' font-size="16.8" font-weight="400" font-style="normal" fill="#505050" text-anchor="start" textLength="101.5" lengthAdjust="spacingAndGlyphs"  stroke="#505050" stroke-width="0.15">Waning Crescent</text>
<path d="M0,791.5 Q0.8,799.2 6.5,800 L0,800 Z" fill="#0e0d18"/>
<path d="M0.8,791.5 Q1.6,798.4 7.5,799.6" fill="none" stroke="#ffffff" stroke-width="1.2" opacity="0.9"/>
</svg>
</body></html>
